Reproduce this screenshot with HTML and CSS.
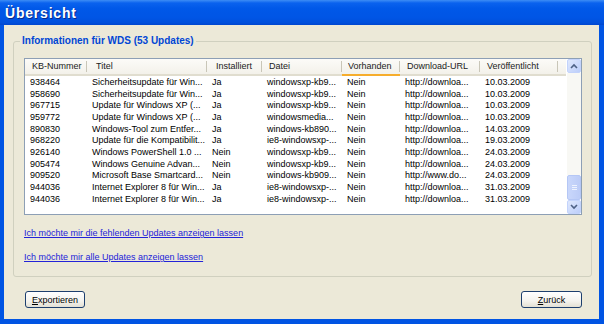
FILE: index.html
```html
<!DOCTYPE html>
<html lang="de">

<head>
  <meta charset="UTF-8">
  <meta name="viewport" content="width=device-width, initial-scale=1.0">
  <title>Übersicht</title>
  <link rel="stylesheet" href="styles.css">
</head>

<body>
  <div class="window">
    <div class="titlebar">
      <span class="title">Übersicht</span>
    </div>

    <div class="client">
      <fieldset class="group">
        <legend>Informationen für WDS (53 Updates)</legend>

        <div class="listview">
          <div class="lv-main">
            <div class="lv-head">
              <div class="hd">KB-Nummer</div>
              <div class="hd">Titel</div>
              <div class="hd">Installiert</div>
              <div class="hd">Datei</div>
              <div class="hd hot">Vorhanden</div>
              <div class="hd">Download-URL</div>
              <div class="hd">Veröffentlicht</div>
              <div class="hd last"></div>
            </div>
            <div class="lv-body" id="rows"></div>
          </div>
          <div class="vscroll">
            <div class="sb-btn">
              <svg width="8" height="6" viewBox="0 0 8 6"><path d="M1 5 L4 2 L7 5" fill="none" stroke="#4d6185" stroke-width="1.6"/></svg>
            </div>
            <div class="sb-track"></div>
            <div class="sb-thumb">
              <span></span><span></span><span></span>
            </div>
            <div class="sb-btn">
              <svg width="8" height="6" viewBox="0 0 8 6"><path d="M1 1 L4 4 L7 1" fill="none" stroke="#4d6185" stroke-width="1.6"/></svg>
            </div>
          </div>
        </div>

        <a class="link" href="#">Ich möchte mir die fehlenden Updates anzeigen lassen</a>
        <a class="link" href="#">Ich möchte mir alle Updates anzeigen lassen</a>
      </fieldset>

      <div class="buttons">
        <button class="btn btn-export"><u>E</u>xportieren</button>
        <button class="btn btn-back"><u>Z</u>urück</button>
      </div>
    </div>
  </div>

  <script>
    const updates = [
      ['938464', 'Sicherheitsupdate für Win...', 'Ja', 'windowsxp-kb9...', 'Nein', 'http://downloa...', '10.03.2009'],
      ['958690', 'Sicherheitsupdate für Win...', 'Ja', 'windowsxp-kb9...', 'Nein', 'http://downloa...', '10.03.2009'],
      ['967715', 'Update für Windows XP (...', 'Ja', 'windowsxp-kb9...', 'Nein', 'http://downloa...', '10.03.2009'],
      ['959772', 'Update für Windows XP (...', 'Ja', 'windowsmedia...', 'Nein', 'http://downloa...', '10.03.2009'],
      ['890830', 'Windows-Tool zum Entfer...', 'Ja', 'windows-kb890...', 'Nein', 'http://downloa...', '14.03.2009'],
      ['968220', 'Update für die Kompatibilit...', 'Ja', 'ie8-windowsxp-...', 'Nein', 'http://downloa...', '19.03.2009'],
      ['926140', 'Windows PowerShell 1.0 ...', 'Nein', 'windowsxp-kb9...', 'Nein', 'http://downloa...', '24.03.2009'],
      ['905474', 'Windows Genuine Advan...', 'Nein', 'windowsxp-kb9...', 'Nein', 'http://downloa...', '24.03.2009'],
      ['909520', 'Microsoft Base Smartcard...', 'Nein', 'windows-kb909...', 'Nein', 'http://www.do...', '24.03.2009'],
      ['944036', 'Internet Explorer 8 für Win...', 'Ja', 'ie8-windowsxp-...', 'Nein', 'http://downloa...', '31.03.2009'],
      ['944036', 'Internet Explorer 8 für Win...', 'Ja', 'ie8-windowsxp-...', 'Nein', 'http://downloa...', '31.03.2009'],
    ];

    function buildRows() {
      const body = document.getElementById('rows');
      body.innerHTML = '';

      for (const rowData of updates) {
        const row = document.createElement('div');
        row.className = 'lv-row';
        row.innerHTML = rowData.map(cell => `<div class="cell">${cell}</div>`).join('');
        body.appendChild(row);
      }
    }

    buildRows();
  </script>
</body>

</html>
```

FILE: styles.css
```css
* {
  box-sizing: border-box;
}

body {
  margin: 0;
  font-family: 'Liberation Sans', Arial, sans-serif;
  font-size: 9px;
  color: #000;
}

.window {
  width: 604px;
  height: 324px;
  display: flex;
  flex-direction: column;
  background: #0054e3;
  overflow: hidden;
}

.titlebar {
  height: 25px;
  flex: none;
  display: flex;
  align-items: center;
  padding-left: 5px;
  background: linear-gradient(to bottom, #3d8df5 0%, #0a62ee 12%, #0058e8 35%, #0055e5 70%, #0050dc 90%, #0046cf 100%);
}

.title {
  color: #fff;
  font-weight: bold;
  font-size: 14px;
  letter-spacing: 0.8px;
  text-shadow: 1px 1px 0 #0a2a8a;
}

.client {
  flex: 1;
  margin: 0 5px 5px 4px;
  background: #ece9d8;
  display: flex;
  flex-direction: column;
}

.group {
  margin: 10px 7px 0 9px;
  padding: 11px 9px 13px 10px;
  border: 1px solid #d0d0bf;
  border-radius: 3px;
  min-width: 0;
}

.group legend {
  margin-left: -4px;
  padding: 0 2px;
  color: #0046d5;
  font-weight: bold;
  font-size: 10px;
  line-height: 12px;
}

.listview {
  height: 157px;
  border: 1px solid #8d9fb5;
  background: #fff;
  display: flex;
}

.lv-main {
  width: 541px;
  overflow: hidden;
}

.lv-head {
  height: 17px;
  display: grid;
  grid-template-columns: 62px 120px 55px 80px 58px 80px 78px 8px;
  background: linear-gradient(to bottom, #fcfbf8, #f3f1ea);
  border-bottom: 2px solid #e0ddcf;
}

.hd {
  padding-left: 7px;
  line-height: 15px;
  white-space: nowrap;
  overflow: hidden;
  color: #222;
  background: linear-gradient(#c9c6b8, #c9c6b8) no-repeat right center / 1px 11px;
}

.hd:nth-child(2),
.hd:nth-child(3) {
  padding-left: 9px;
}

.hd:nth-child(5) {
  padding-left: 6px;
}

.hd.hot {
  border-bottom: 2px solid #f6ad2c;
  margin-bottom: -2px;
  line-height: 15px;
}

.hd.last {
  background: none;
}

.lv-body {
  padding-top: 1px;
}

.lv-row {
  display: grid;
  grid-template-columns: 62px 120px 55px 80px 58px 80px 78px;
  height: 11.66px;
  line-height: 11.66px;
}

.cell {
  padding-left: 5px;
  white-space: nowrap;
  overflow: hidden;
}

.vscroll {
  width: 15px;
  padding-left: 1px;
  display: flex;
  flex-direction: column;
  background: #fff;
}

.sb-btn {
  height: 14px;
  flex: none;
  display: flex;
  align-items: center;
  justify-content: center;
  background: linear-gradient(to bottom right, #dfe8fd, #bccefa);
  border: 1px solid #c3d3fb;
  border-radius: 2px;
}

.sb-track {
  height: 102px;
  background: #f8f8f4;
}

.sb-thumb {
  height: 25px;
  display: flex;
  flex-direction: column;
  align-items: center;
  justify-content: center;
  gap: 1px;
  background: linear-gradient(to right, #c9d7fb, #bcccf7);
  border: 1px solid #b5c7f5;
  border-radius: 2px;
}

.sb-thumb span {
  width: 5px;
  height: 1px;
  background: #eef3fe;
}

.link {
  display: block;
  width: max-content;
  margin-top: 13px;
  line-height: 11px;
  color: #2323d8;
  text-decoration: underline;
}

.buttons {
  margin-top: 14px;
  padding: 0 17px 0 21px;
  display: flex;
  justify-content: space-between;
}

.btn {
  height: 17px;
  padding: 0;
  font-family: 'Liberation Sans', Arial, sans-serif;
  font-size: 9px;
  color: #000;
  border: 1px solid #1d3f6e;
  border-radius: 3px;
  background: linear-gradient(to bottom, #ffffff 0%, #f4f3ee 60%, #e3e0d4 100%);
}

.btn-export {
  width: 60px;
}

.btn-back {
  width: 61px;
}
```
